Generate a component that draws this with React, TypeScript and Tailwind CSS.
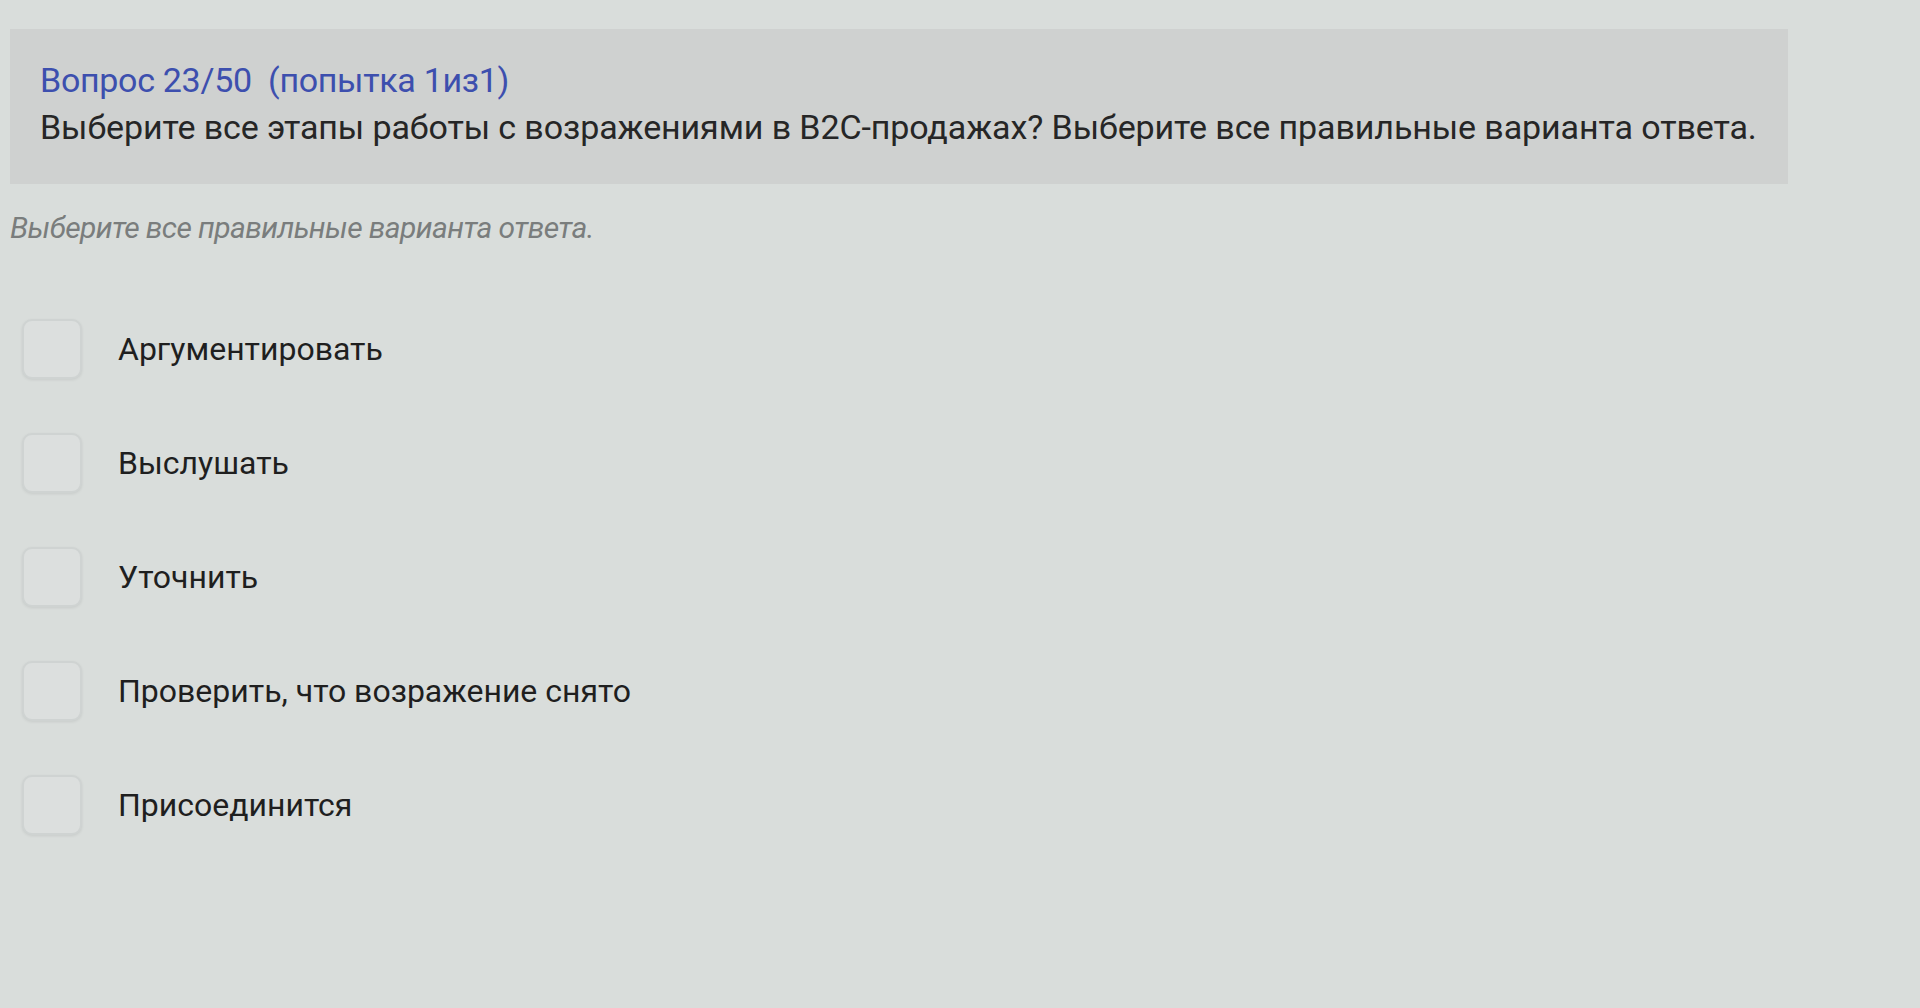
import React, { useState } from 'react';

const options = [
  'Аргументировать',
  'Выслушать',
  'Уточнить',
  'Проверить, что возражение снято',
  'Присоединится',
];

const QuestionCard = () => {
  const [checked, setChecked] = useState<boolean[]>(options.map(() => false));
  const toggle = (i: number) => setChecked(prev => prev.map((v, j) => (j === i ? !v : v)));

  return (
    <div className="min-h-screen w-full bg-[#d9dddb] pt-[29px] pl-[10px]" style={{ fontFamily: 'Roboto, "Noto Sans", sans-serif' }}>
      {/* question header */}
      <div className="w-[1778px] h-[155px] bg-[#cfd1d0] pl-[30px] pt-[31px]">
        <div className="text-[34px] leading-[40px] text-[#3d4fae] tracking-[-0.3px]">
          Вопрос 23/50&nbsp;&nbsp;(попытка 1из1)
        </div>
        <div className="mt-[7px] text-[34px] leading-[40px] text-[#262626] tracking-[-0.1px]">
          Выберите все этапы работы с возражениями в B2C-продажах? Выберите все правильные варианта ответа.
        </div>
      </div>

      <div className="mt-[26px] text-[30px] leading-[36px] italic text-[#7a7d7d] tracking-[-0.6px]">
        Выберите все правильные варианта ответа.
      </div>

      {/* answer options */}
      <div className="mt-[73px] flex flex-col gap-[54px]">
        {options.map((label, i) => (
          <label key={label} className="flex items-center cursor-pointer" onClick={() => toggle(i)}>
            <span
              className={`ml-[12px] w-[60px] h-[60px] rounded-[10px] border-2 border-[#cfd3d2] shadow-[0_1px_3px_rgba(0,0,0,0.08)] ${checked[i] ? 'bg-[#3d4fae]' : 'bg-[#dcdfde]'}`}
            />
            <span className="ml-[36px] text-[32px] leading-[40px] text-[#1f1f1f]">{label}</span>
          </label>
        ))}
      </div>
    </div>
  );
};

export default function App() {
  return <QuestionCard />;
}
